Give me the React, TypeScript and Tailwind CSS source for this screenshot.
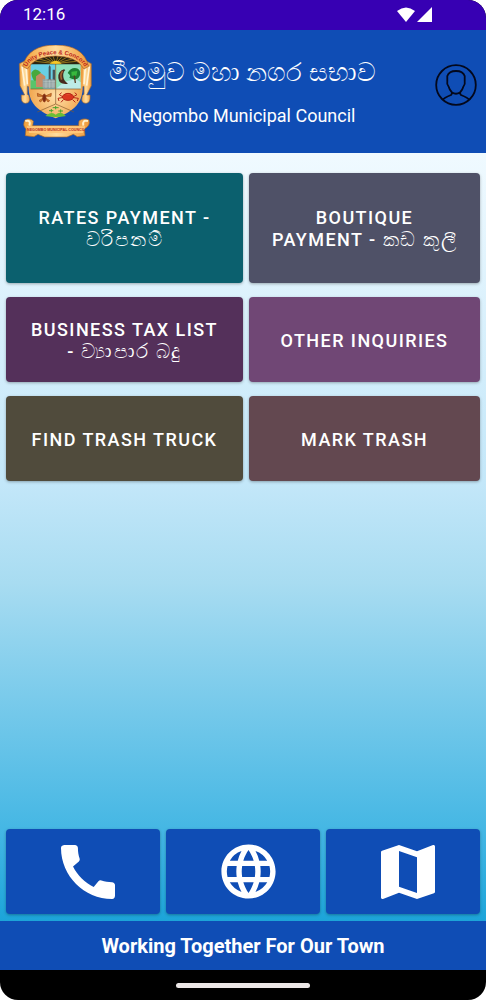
import { MdCall, MdLanguage, MdMap } from 'react-icons/md';

const services = [
  { label: 'RATES PAYMENT -', sinhala: 'වරිපනම්', style: 'h-[110px] bg-[#0b606e]' },
  { label: 'BOUTIQUE PAYMENT -', sinhala: 'කඩ කුලී', style: 'h-[110px] bg-[#4f5167]' },
  { label: 'BUSINESS TAX LIST -', sinhala: 'ව්‍යාපාර බදු', style: 'h-[85px] bg-[#54305a]' },
  { label: 'OTHER INQUIRIES', sinhala: '', style: 'h-[85px] bg-[#704775]' },
  { label: 'FIND TRASH TRUCK', sinhala: '', style: 'h-[85px] bg-[#504b3c]' },
  { label: 'MARK TRASH', sinhala: '', style: 'h-[85px] bg-[#634850]' },
];

const shadow = 'shadow-[0_1px_3px_rgba(0,0,0,0.3)]';

function Crest() {
  return (
    <svg viewBox="24 28 222 282" className="h-[94px] w-[74px] shrink-0" role="img" aria-label="Negombo Municipal Council crest">
      <defs>
        <linearGradient id="gold" x1="0" x2="1">
          <stop offset="0" stopColor="#f2a23c" />
          <stop offset="0.5" stopColor="#ffdc9c" />
          <stop offset="1" stopColor="#ef9a3a" />
        </linearGradient>
        <radialGradient id="shield" cx="0.5" cy="0.6" r="0.6">
          <stop offset="0" stopColor="#ffdfa8" />
          <stop offset="1" stopColor="#ee9a3c" />
        </radialGradient>
        <path id="motto" d="M49 96C72 42 202 42 225 96" />
      </defs>
      {/* side ribbons */}
      <path d="M28 84L56 70L62 154L52 152L52 176Q58 178 58 186Q62 202 46 203Q34 202 34 188L34 178L44 178L30 150Z" fill="url(#gold)" stroke="#9c6a3c" strokeWidth="2" />
      <path d="M244 84L218 70L212 154L222 152L222 176Q216 178 216 186Q212 202 228 203Q240 202 240 188L240 178L230 178L244 150Z" fill="url(#gold)" stroke="#9c6a3c" strokeWidth="2" />
      <path d="M36 92L44 150M48 92L52 146M238 92L230 150M226 92L222 146" stroke="#fff3d8" strokeWidth="5" fill="none" />
      {/* shield */}
      <path d="M56 80H218V160C215 208 186 228 137 248C88 228 59 208 56 160Z" fill="url(#shield)" />
      <path d="M62 84H137V160H62Z" fill="#69cfe5" />
      <path d="M137 84H212V160H137Z" fill="#8fe2bb" />
      <path d="M62 134H100V160H62Z" fill="#58c46b" />
      <path d="M64 112Q74 92 92 110Q96 132 74 136Q66 130 64 112Z" fill="#48a93d" />
      <path d="M78 122L92 112L106 122V154H78Z" fill="#c68a65" />
      <path d="M98 130H137V158H98Z" fill="#93a1a2" />
      <path d="M116 132V94L119 88L122 94V132M128 132V102H135V132" fill="#45545a" />
      <path d="M100 138H137M100 145H137M100 151H137M108 130V157M119 130V157M129 130V157" stroke="#dbe6e4" strokeWidth="1" />
      <path d="M137 160L164 138L198 130L212 140V160Z" fill="#bdebe7" />
      <path d="M162 101Q143 107 145 127Q147 148 174 144Q162 136 160 124Q158 110 166 103Z" fill="#472b1f" />
      <path d="M158 106Q149 118 155 132" stroke="#a2632f" strokeWidth="5" fill="none" />
      <path d="M173 112Q184 92 204 99Q216 108 207 125Q199 137 178 126Q184 119 173 112Z" fill="#1d7f31" />
      <path d="M184 108L202 106L199 120L185 120Z" fill="#38b83d" />
      <path d="M193 120L196 142" stroke="#583c20" strokeWidth="4" />
      <path d="M62 160H212M137 84V205M137 205L82 229M137 205L192 229" stroke="#84592c" strokeWidth="2" fill="none" />
      {/* bee */}
      <g stroke="#9d4015" strokeWidth="2" fill="#d7862c">
        <path d="M102 182L82 173L83 182ZM104 182L124 173L123 182ZM101 186L87 195L92 199ZM105 186L119 195L114 199Z" />
        <ellipse cx="103" cy="187" rx="5" ry="12" fill="#7b2c15" />
      </g>
      {/* crab */}
      <g stroke="#b62616" strokeWidth="3" fill="none">
        <path d="M156 182L148 177L155 171M192 182L201 177L194 171M156 186L144 188L147 196M192 186L205 188L202 196M160 192L153 200M188 192L196 200" />
        <ellipse cx="174" cy="184" rx="17" ry="10" fill="#da351f" />
        <path d="M162 178Q174 168 186 178" fill="#e4492a" />
      </g>
      {/* paddy field */}
      <path d="M110 238Q126 227 137 237Q151 225 164 238L168 241Q138 247 106 241Z" fill="#69bf36" />
      <path d="M117 225H130M145 226H159M128 216H146M137 211V221M124 220V230M152 221V231" stroke="#45a42e" strokeWidth="3" />
      {/* rising sun */}
      <path d="M54 86Q137 20 220 86Z" fill="#2b2411" />
      <path d="M137 84L76 77M137 84L88 70M137 84L101 64M137 84L115 61M137 84L128 59M137 84L145 59M137 84L158 61M137 84L172 64M137 84L186 70M137 84L198 77" stroke="#c49a22" strokeWidth="2" />
      <path d="M119 84Q137 66 155 84Z" fill="#f6c928" />
      {/* motto arch */}
      <path d="M38 92Q54 28 137 28Q220 28 236 92L222 100Q201 62 137 61Q73 62 52 100Z" fill="url(#gold)" stroke="#a7612c" strokeWidth="2" />
      <text fill="#bc271d" fontSize="18" fontWeight="700" fontFamily="Liberation Sans, sans-serif">
        <textPath href="#motto" startOffset="50%" textAnchor="middle">Unity Peace &amp; Concord</textPath>
      </text>
      {/* name scroll */}
      <path d="M68 270L70 256Q58 245 45 253Q36 268 48 280L46 300L72 303L84 296L104 304H171L190 296L202 303L225 300L223 280Q242 270 237 253Q220 245 207 256L206 270Z" fill="url(#gold)" stroke="#ad6a29" strokeWidth="2" />
      <path d="M46 256Q64 251 58 270M234 256Q216 251 220 270" fill="none" stroke="#fff0cb" strokeWidth="6" />
      <path d="M50 272H226L218 292H58Z" fill="#ffc779" />
      <text x="138" y="287" textAnchor="middle" fill="#b62b20" fontSize="11" fontWeight="700" fontFamily="Liberation Sans, sans-serif">NEGOMBO MUNICIPAL COUNCIL</text>
    </svg>
  );
}

function ProfileIcon() {
  return (
    <svg viewBox="0 0 42 42" className="size-[42px]" fill="none" stroke="#03081c" strokeWidth="1.8" strokeLinejoin="round">
      <circle cx="21" cy="21" r="19.8" />
      <path d="M7.8 35.8Q9 34 16 31Q17 30 17 28.5Q14.5 26 13.8 23Q11.5 20 12.3 17V12Q14 7 21 7Q28 7 29.7 12V17Q30.5 20 28.2 23Q27.5 26 25 28.5Q25 30 26 31Q33 34 34.2 35.8M17 28.5Q21 31 25 28.5" />
    </svg>
  );
}

export default function App() {
  return (
    <div className="bg-white">
      <div className="flex min-h-screen flex-col overflow-hidden rounded-[18px] bg-black font-[Roboto,'Noto_Sans',sans-serif] text-white">
        <div className="flex h-[30px] items-center justify-between bg-[#3700b3] pr-[53px] pl-[23px]">
          <span className="text-[17px]">12:16</span>
          <svg viewBox="0 0 36 16" className="h-4 w-9" fill="#fff">
            <path d="M0 4Q9-3 18 4L9 15Z" />
            <path d="M20 15L35 0V15Z" />
          </svg>
        </div>
        <header className="flex h-[123px] items-center bg-[#0f4db5] pr-[9px] pl-[18px]">
          <Crest />
          <div className="flex flex-1 flex-col items-center gap-4 pt-1 pr-[42px]">
            <h1 className="text-[26px] leading-7 whitespace-nowrap">මීගමුව මහා නගර සභාව</h1>
            <p className="text-lg leading-7 whitespace-nowrap">Negombo Municipal Council</p>
          </div>
          <button aria-label="Profile" className="mb-[14px] shrink-0">
            <ProfileIcon />
          </button>
        </header>
        <main className="flex flex-1 flex-col justify-between bg-[linear-gradient(#f0faff,#c3e7f9_43%,#a8dcf1_56%,#45b7e4_88%,#1ca4d9)] px-[6px] pt-5 pb-[7px]">
          <div className="grid grid-cols-[237fr_231fr] gap-x-[6px] gap-y-[14px]">
            {services.map((s) => (
              <button
                key={s.label}
                className={`${s.style} ${shadow} rounded-[4px] px-5 pt-[2px] text-lg leading-[22px] font-medium tracking-[0.08em]`}
              >
                {s.label}
                {s.sinhala && <span className="text-[20px] leading-none"> {s.sinhala}</span>}
              </button>
            ))}
          </div>
          <div className="grid grid-cols-3 gap-[6px]">
            <button aria-label="Call" className={`${shadow} flex h-[85px] items-center justify-center rounded-[4px] bg-[#0f4db5] pl-[10px]`}>
              <MdCall className="size-[72px]" />
            </button>
            <button aria-label="Website" className={`${shadow} flex h-[85px] items-center justify-center rounded-[4px] bg-[#0f4db5] pl-[10px]`}>
              <MdLanguage className="size-[65px]" />
            </button>
            <button aria-label="Map" className={`${shadow} flex h-[85px] items-center justify-center rounded-[4px] bg-[#0f4db5] pl-[10px]`}>
              <MdMap className="size-[72px]" />
            </button>
          </div>
        </main>
        <footer className="flex h-[49px] items-center justify-center bg-[#0f4db5] text-xl font-bold">
          Working Together For Our Town
        </footer>
        <div className="flex h-[30px] items-center justify-center">
          <div className="h-[5px] w-[134px] rounded-full bg-[#ece7e7]" />
        </div>
      </div>
    </div>
  );
}
